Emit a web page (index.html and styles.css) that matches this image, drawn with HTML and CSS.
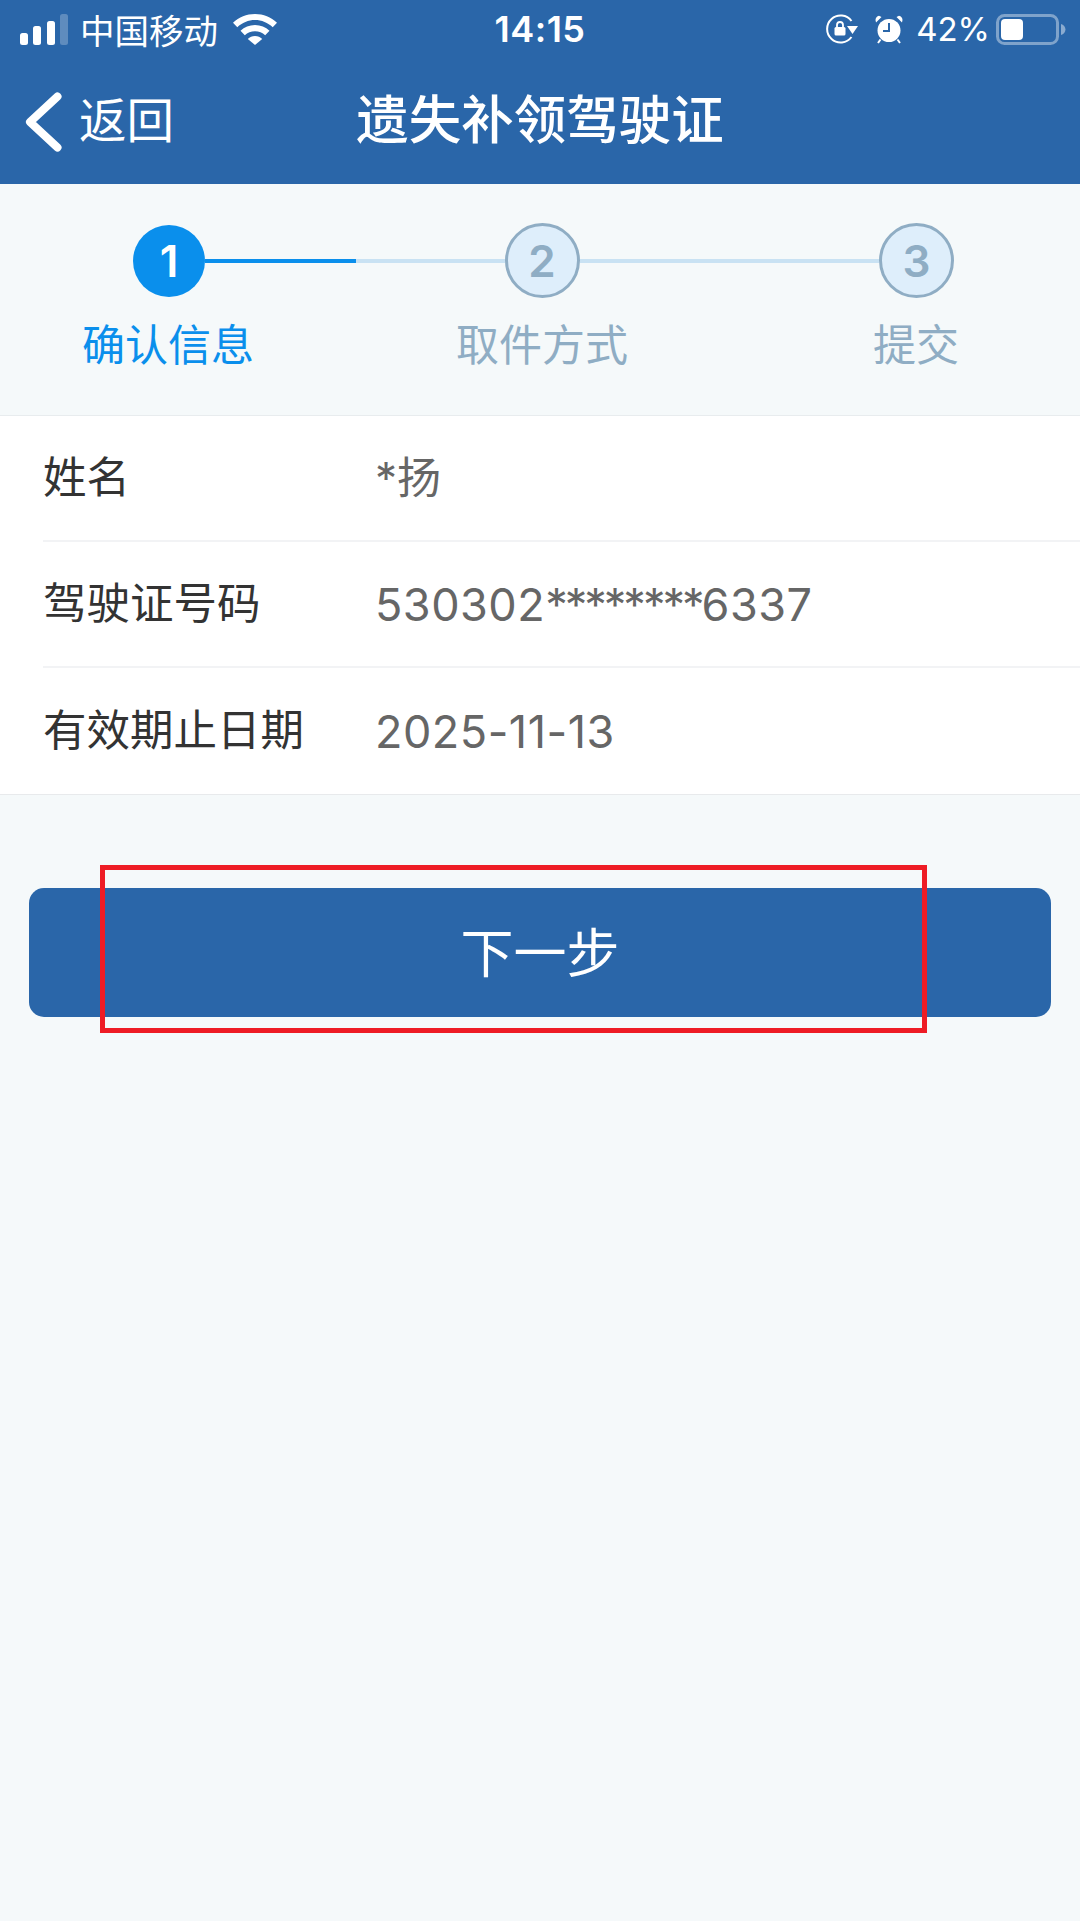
FILE: index.html
```html
<!DOCTYPE html>
<html lang="zh-CN">
<head>
  <meta charset="UTF-8">
  <meta name="viewport" content="width=device-width, initial-scale=1.0">
  <title>遗失补领驾驶证</title>
  <link rel="stylesheet" href="styles.css">
</head>
<body>
  <div class="page">
    <header class="topbar">
      <div class="status">
        <div class="status-left">
          <svg class="signal" width="48" height="31" viewBox="0 0 48 31">
            <rect x="0" y="19" width="8" height="12" rx="2.5" fill="#fff"/>
            <rect x="13" y="12" width="8" height="19" rx="2.5" fill="#fff"/>
            <rect x="27" y="7" width="8" height="24" rx="2.5" fill="#fff"/>
            <rect x="40" y="0" width="8" height="31" rx="2.5" fill="#fff" opacity=".25"/>
          </svg>
          <span class="carrier">中国移动</span>
          <svg class="wifi" width="44" height="31" viewBox="0 0 44 31">
            <path d="M22 0C13.5 0 6 3.3 0 8.8l4.3 4.4C9.2 8.7 15.3 6 22 6s12.800 2.700 17.700 7.200L44 8.800C38 3.300 30.500 0 22 0z" fill="#fff"/>
            <path d="M22 11c-5.600 0-10.600 2.200-14.500 5.800l4.300 4.400c2.700-2.500 6.300-4 10.200-4s7.500 1.500 10.200 4l4.300-4.400C32.600 13.200 27.600 11 22 11z" fill="#fff"/>
            <path d="M22 22c-2.800 0-5.300 1.100-7.200 2.900L22 31l7.200-6.100C27.300 23.100 24.800 22 22 22z" fill="#fff"/>
          </svg>
        </div>
        <span class="clock">14:15</span>
        <div class="status-right">
          <svg class="rotlock" width="32" height="30" viewBox="0 0 32 30">
            <path d="M25.500 7A13.500 13.500 0 1 0 25.500 23" fill="none" stroke="#fff" stroke-width="2"/>
            <path d="M21 12h11l-5.500 8z" fill="#fff"/>
            <rect x="8.500" y="13" width="11" height="8.500" rx="1.500" fill="#fff"/>
            <path d="M11 13.500V11a3 3 0 0 1 6 0v2.500" fill="none" stroke="#fff" stroke-width="1.800"/>
          </svg>
          <svg class="alarm" width="28" height="29" viewBox="0 0 28 29">
            <circle cx="14" cy="15.500" r="11.500" fill="#fff"/>
            <path d="M14 8v8H8" fill="none" stroke="#2a66a9" stroke-width="2"/>
            <path d="M1 7.500 6.500 2 4 .8C2 1 .5 3 .5 5zM27 7.500 21.500 2 24 .8c2 .2 3.500 2.200 3.500 4.200z" fill="#fff"/>
            <path d="M5.500 24.500 3 28M22.500 24.500 25 28" stroke="#fff" stroke-width="2"/>
          </svg>
          <span class="percent">42%</span>
          <svg class="battery" width="70" height="31" viewBox="0 0 70 31">
            <rect x="1.500" y="1.500" width="60" height="28" rx="7" fill="none" stroke="#fff" stroke-opacity=".4" stroke-width="3"/>
            <rect x="5" y="5" width="22" height="21" rx="4" fill="#fff"/>
            <path d="M65 10c2.500.5 4.500 3 4.500 5.500S67.500 20.500 65 21z" fill="#fff" fill-opacity=".45"/>
          </svg>
        </div>
      </div>
      <div class="navbar">
        <a class="back">
          <svg width="37" height="62" viewBox="0 0 37 62">
            <path d="M32.500 4.500 5 30l27.500 25.500" fill="none" stroke="#fff" stroke-width="8" stroke-linecap="round" stroke-linejoin="round"/>
          </svg>
          <span class="back-text">返回</span>
        </a>
        <h1 class="title">遗失补领驾驶证</h1>
      </div>
    </header>

    <section class="steps">
      <div class="track">
        <span class="dot dot-active">1</span>
        <span class="line"><i class="line-done"></i></span>
        <span class="dot">2</span>
        <span class="line"></span>
        <span class="dot">3</span>
      </div>
      <div class="labels">
        <span class="label label-active">确认信息</span>
        <span class="label">取件方式</span>
        <span class="label">提交</span>
      </div>
    </section>

    <section class="info">
      <div class="row"><span class="row-name">姓名</span><span class="row-value row-value-cjk">*扬</span></div>
      <div class="row"><span class="row-name">驾驶证号码</span><span class="row-value">530302<span class="mask">********</span>6337</span></div>
      <div class="row"><span class="row-name">有效期止日期</span><span class="row-value">2025-11-13</span></div>
    </section>

    <button class="btn-next">下一步</button>

    <div class="mark"></div>
  </div>
</body>
</html>
```

FILE: styles.css
```css
* {
  box-sizing: border-box;
}
body {
  margin: 0;
  background: #f5f9fa;
  font-family: Inter, "Noto Sans CJK SC", sans-serif;
}
.page {
  position: relative;
  width: 1080px;
  height: 1921px;
  overflow: hidden;
  background: #f5f9fa;
}
.topbar {
  height: 184px;
  background: #2a66a9;
  color: white;
}
.status {
  display: grid;
  grid-template-columns: 1fr auto 1fr;
  align-items: center;
  height: 58px;
  padding: 0 14px 0 20px;
}
.status-left, .status-right {
  display: flex;
  align-items: center;
}
.status-right {
  justify-content: flex-end;
}
.status svg {
  display: block;
}
.carrier {
  margin-left: 12px;
  font-size: 34.5px;
}
.wifi {
  margin-left: 15px;
}
.clock {
  margin-right: 6px;
  font-size: 36px;
  font-weight: 600;
  letter-spacing: 0.5px;
}
.alarm {
  margin-left: 17px;
}
.percent {
  margin-left: 13px;
  font-size: 33px;
}
.battery {
  margin-left: 6px;
}
.navbar {
  position: relative;
  display: flex;
  align-items: center;
  justify-content: center;
  height: 126px;
  padding-bottom: 10px;
}
.back {
  position: absolute;
  left: 25px;
  top: 34px;
  display: flex;
  align-items: center;
  gap: 17px;
  height: 62px;
  font-size: 47.5px;
  line-height: 1;
}
.back svg {
  display: block;
}
.back-text {
  padding-bottom: 4px;
}
.title {
  margin: 0;
  font-size: 52.5px;
  font-weight: 500;
}
.steps {
  height: 232px;
  padding-top: 39px;
  border-bottom: 1px solid #e8ecee;
}
.track {
  display: flex;
  align-items: center;
  padding: 0 126px 0 133px;
}
.dot {
  display: flex;
  align-items: center;
  justify-content: center;
  flex: none;
  width: 75px;
  height: 75px;
  border: 3px solid #8fadc4;
  border-radius: 50%;
  background: #deeefb;
  color: #8fadc4;
  font-size: 44px;
  font-weight: 600;
}
.dot-active {
  width: 72px;
  height: 72px;
  border: none;
  background: #0a8fec;
  color: white;
}
.line {
  flex: 1;
  height: 4px;
  background: #c9e2f3;
}
.line-done {
  display: block;
  width: 50.5%;
  height: 100%;
  background: #0a8fec;
}
.labels {
  display: flex;
  justify-content: space-between;
  margin-top: 17px;
  padding: 0 77px 0 81px;
}
.label {
  width: 174px;
  color: #8fadc4;
  font-size: 43px;
  line-height: 60px;
  text-align: center;
}
.label-active {
  color: #0a8fec;
}
.info {
  background: white;
  padding-left: 43px;
  border-bottom: 1px solid #e8eaec;
}
.row {
  display: flex;
  align-items: center;
  height: 126px;
  border-bottom: 2px solid #f2f3f5;
}
.row:last-child {
  border-bottom: none;
}
.row-name {
  width: 332px;
  padding: 0 0 7px;
  color: #333;
  font-size: 43.5px;
}
.row-value {
  color: #666;
  font-size: 45px;
  letter-spacing: 0.5px;
}
.row-value-cjk {
  padding-bottom: 7px;
  font-size: 44px;
  letter-spacing: 0;
}
.mask {
  letter-spacing: -3px;
}
.btn-next {
  display: block;
  width: 1022px;
  height: 129px;
  margin: 93px 29px 0;
  padding: 0 0 6px;
  border: none;
  border-radius: 15px;
  background: #2a66a9;
  color: white;
  font-family: inherit;
  font-size: 53px;
}
.mark {
  position: absolute;
  left: 100px;
  top: 865px;
  width: 827px;
  height: 168px;
  border: 5px solid #ee1c25;
}
```
